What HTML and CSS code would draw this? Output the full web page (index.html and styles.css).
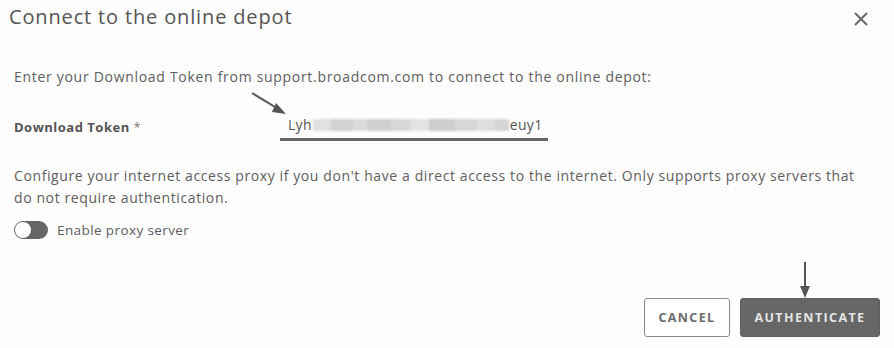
FILE: index.html
```html
<!DOCTYPE html>
<html>
<head>
<meta charset="utf-8">
<link rel="stylesheet" href="styles.css">
</head>
<body>
<div class="dialog">
  <div class="header">
    <h1 class="title">Connect to the online depot</h1>
    <button class="close" aria-label="Close">
      <svg width="14" height="14" viewBox="0 0 14 14"><path d="M1.5 1.5 L12.5 12.5 M12.5 1.5 L1.5 12.5" stroke="#6a6a6a" stroke-width="2" stroke-linecap="round"/></svg>
    </button>
  </div>
  <div class="body">
    <p class="intro">Enter your Download Token from support.broadcom.com to connect to the online depot:</p>
    <div class="field">
      <label class="label">Download Token <span class="req">*</span></label>
      <div class="input">
        <span class="val">Lyh</span><span class="blur"><i class="b1"></i><i class="b2"></i><i class="b3"></i><i class="b4"></i><i class="b5"></i><i class="b6"></i><i class="b7"></i><i class="b8"></i><i class="b9"></i><i class="b10"></i></span><span class="val">euy1</span>
        <svg class="arrow-diag" width="40" height="26" viewBox="0 0 40 26"><path d="M2 2 L30 19" stroke="#555" stroke-width="2"/><path d="M26 12 L36 23 L22 21 Z" fill="#555"/></svg>
      </div>
    </div>
    <p class="proxy-text">Configure your internet access proxy if you don't have a direct access to the internet. Only supports proxy servers that do not require authentication.</p>
    <div class="toggle-row">
      <span class="toggle"><span class="knob"></span></span>
      <span class="toggle-label">Enable proxy server</span>
    </div>
  </div>
  <div class="footer">
    <button class="btn btn-outline">CANCEL</button>
    <button class="btn btn-primary">AUTHENTICATE
      <svg class="arrow-down" width="12" height="38" viewBox="0 0 12 38"><path d="M6 0 L6 26" stroke="#555" stroke-width="2"/><path d="M1 24 L11 24 L6 36 Z" fill="#555"/></svg>
    </button>
  </div>
</div>
</body>
</html>
```

FILE: styles.css
```css
* { box-sizing: border-box; }
html, body { margin: 0; padding: 0; background: #fdfdfd; }
body {
  font-family: "Open Sans", "Liberation Sans", sans-serif;
  color: #5a5a5a;
  width: 894px;
  height: 348px;
  overflow: hidden;
}
.dialog {
  padding: 0 14px 0 14px;
}
.header {
  display: flex;
  justify-content: space-between;
  align-items: flex-start;
  padding-top: 3px;
  margin-left: -5px;
}
.title {
  margin: 0;
  font-size: 20px;
  font-weight: 400;
  color: #555;
  line-height: 28px;
  letter-spacing: 0.85px;
}
.close {
  background: none;
  border: 0;
  padding: 0;
  margin: 9px 12px 0 0;
  width: 14px;
  height: 14px;
  display: flex;
}
.body { padding-top: 36px; }
.intro {
  margin: 0;
  font-size: 14px;
  line-height: 20px;
  letter-spacing: 0.7px;
  color: #5e5e5e;
}
.field {
  display: flex;
  align-items: flex-end;
  margin-top: 28px;
}
.label {
  width: 266px;
  font-size: 13px;
  font-weight: 700;
  letter-spacing: 0.5px;
  color: #555;
  line-height: 20px;
  padding-bottom: 4px;
}
.req { font-weight: 400; color: #777; }
.input {
  position: relative;
  width: 268px;
  border-bottom: 3px solid #666;
  padding: 0 0 3px 8px;
  display: flex;
  align-items: center;
  font-size: 14px;
  letter-spacing: 0.3px;
  line-height: 20px;
  color: #555;
}
.blur {
  display: flex;
  height: 12px;
  filter: blur(1.2px);
  margin: 0 1px;
}
.blur i { display: block; height: 12px; }
.b1 { width: 18px; background: #e0e0e0; }
.b2 { width: 22px; background: #d2d2d2; }
.b3 { width: 14px; background: #dcdcdc; }
.b4 { width: 24px; background: #cfcfcf; }
.b5 { width: 20px; background: #d8d8d8; }
.b6 { width: 18px; background: #e3e3e3; }
.b7 { width: 26px; background: #cdcdcd; }
.b8 { width: 22px; background: #d6d6d6; }
.b9 { width: 18px; background: #dedede; }
.b10 { width: 14px; background: #d4d4d4; }
.arrow-diag {
  position: absolute;
  left: -30px;
  top: -24px;
}
.proxy-text {
  margin: 24px 0 0 0;
  font-size: 14px;
  line-height: 22px;
  letter-spacing: 0.6px;
  color: #5e5e5e;
  width: 860px;
}
.toggle-row {
  display: flex;
  align-items: center;
  margin-top: 12px;
}
.toggle {
  width: 34px;
  height: 18px;
  border-radius: 9px;
  background: #666;
  position: relative;
  display: inline-block;
}
.knob {
  position: absolute;
  left: 1px;
  top: 1px;
  width: 16px;
  height: 16px;
  border-radius: 50%;
  background: #fff;
}
.toggle-label {
  margin-left: 9px;
  font-size: 13.5px;
  letter-spacing: 0.4px;
  color: #5e5e5e;
}
.footer {
  display: flex;
  justify-content: flex-end;
  gap: 10px;
  margin-top: 59px;
  padding-right: 0;
}
.btn {
  height: 39px;
  border-radius: 3px;
  font-family: "Open Sans", "Liberation Sans", sans-serif;
  font-size: 12.5px;
  font-weight: 700;
  letter-spacing: 1.4px;
  padding: 0;
  position: relative;
}
.btn-outline {
  width: 86px;
  background: #fff;
  border: 1.5px solid #8a8a8a;
  color: #6a6a6a;
}
.btn-primary {
  width: 140px;
  background: #666;
  border: 1px solid #606060;
  color: #e4e4e4;
}
.arrow-down {
  position: absolute;
  left: 58px;
  top: -37px;
}
```
